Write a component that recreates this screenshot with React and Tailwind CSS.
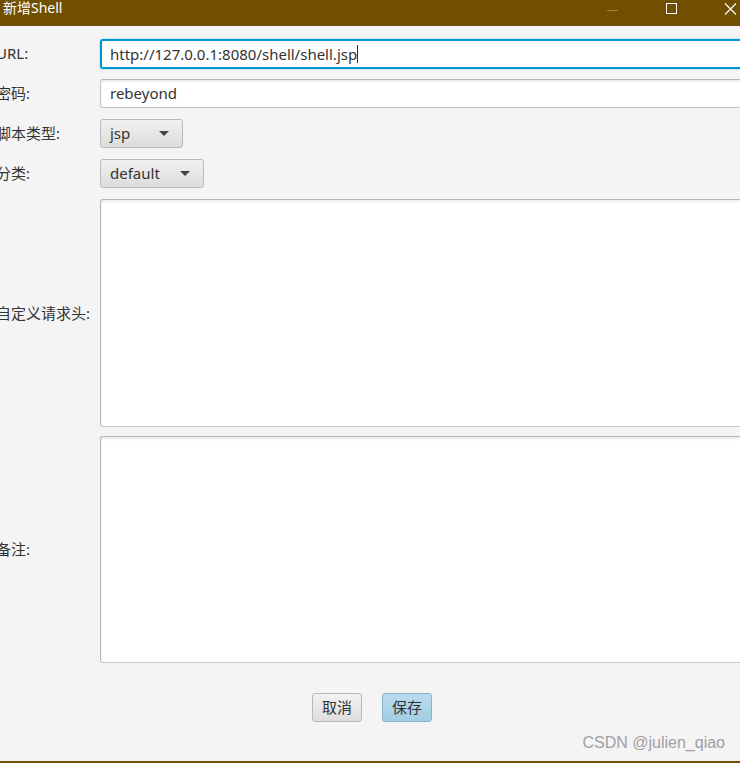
import React from "react";

const font = { fontFamily: '"Noto Sans", "Noto Sans CJK SC", sans-serif' };

function Label({ children, className = "" }) {
  return (
    <div className={`flex items-center text-[15px] text-[#333] whitespace-nowrap ${className}`}>
      {children}
    </div>
  );
}

function Select({ value, width }) {
  return (
    <div
      className={`${width} h-[29px] flex items-center justify-between pl-[9px] pr-[13px] rounded-[3px] border border-[#b9b9b9] bg-gradient-to-b from-[#f1f1f1] to-[#dcdcdc] text-[15px] text-[#333]`}
    >
      <span>{value}</span>
      <span className="w-0 h-0 border-l-[5px] border-r-[5px] border-t-[5px] border-l-transparent border-r-transparent border-t-[#444]" />
    </div>
  );
}

export default function App() {
  return (
    <div
      className="w-[740px] h-[763px] overflow-hidden bg-[#f4f4f4] flex flex-col border-b-2 border-[#714f00]"
      style={font}
    >
      {/* title bar */}
      <div className="h-[26px] shrink-0 bg-[#714f00] flex items-center text-white">
        <span className="pl-[3px] text-[14px] leading-none -mt-[10px]">新增Shell</span>
        <div className="ml-auto flex items-start h-full pt-[2px]">
          <span className="w-[11px] h-px bg-[#9a8450] mt-[8px] mr-[48px]" />
          <span className="w-[11px] h-[11px] border border-white mt-[1px] mr-[47px]" />
          <svg width="13" height="12" viewBox="0 0 13 12" className="mt-[1px] mr-[3px]">
            <path d="M1 0.5 L12 11.5 M12 0.5 L1 11.5" stroke="white" strokeWidth="1.2" />
          </svg>
        </div>
      </div>

      {/* form */}
      <div className="grid grid-cols-[104px_660px] -ml-[4px] mt-[13px] gap-y-[11px]">
        <Label>URL:</Label>
        <div className="h-[30px] -mb-[1px] bg-white border-2 border-[#0096d6] shadow-[0_0_0_1px_#c6e8f6] rounded-[3px] flex items-center pl-[8px] text-[15px] text-[#333]">
          http://127.0.0.1:8080/shell/shell.jsp
          <span className="w-px h-[18px] bg-[#333]" />
        </div>

        <Label>密码:</Label>
        <div className="h-[29px] bg-white border border-[#c4c4c4] border-t-[#b5b5b5] rounded-[3px] shadow-[inset_0_2px_2px_#ececec] flex items-center pl-[9px] text-[15px] text-[#333]">
          rebeyond
        </div>

        <Label>脚本类型:</Label>
        <div>
          <Select value="jsp" width="w-[83px]" />
        </div>

        <Label>分类:</Label>
        <div>
          <Select value="default" width="w-[104px]" />
        </div>

        <Label>自定义请求头:</Label>
        <div className="h-[228px] bg-white border border-[#c9c9c9] border-t-[#b5b5b5] border-l-[#b5b5b5] rounded-[3px] shadow-[inset_0_2px_3px_#ececec]" />

        <Label className="-mt-[2px]">备注:</Label>
        <div className="h-[227px] -mt-[2px] bg-white border border-[#c9c9c9] border-t-[#b5b5b5] border-l-[#b5b5b5] rounded-[3px] shadow-[inset_0_2px_3px_#ececec]" />
      </div>

      {/* buttons */}
      <div className="flex justify-center gap-[20px] mt-[30px] pl-[4px]">
        <button className="w-[50px] h-[29px] rounded-[3px] border border-[#b9b9b9] bg-gradient-to-b from-[#f2f2f2] to-[#dedede] text-[15px] text-[#333]">
          取消
        </button>
        <button className="w-[50px] h-[29px] rounded-[3px] border border-[#86b3c9] bg-gradient-to-b from-[#b8dcef] to-[#a3cde3] text-[15px] text-[#333]">
          保存
        </button>
      </div>

      <div className="mt-auto mb-[6px] pr-[15px] text-right text-[16px] text-[#a0a0a0]" style={{ fontFamily: '"Liberation Sans", sans-serif' }}>
        CSDN @julien_qiao
      </div>
    </div>
  );
}
